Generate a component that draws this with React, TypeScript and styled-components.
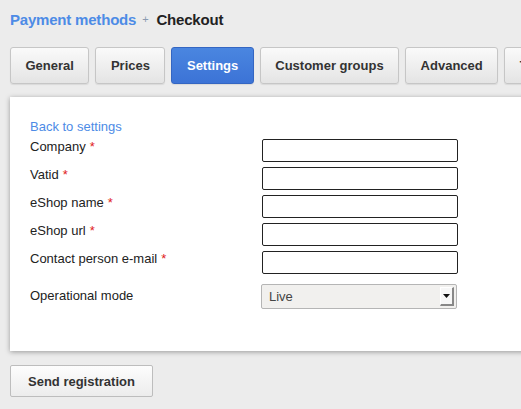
import * as React from 'react';
import styled, { createGlobalStyle } from 'styled-components';

const GlobalStyle = createGlobalStyle`
  html, body {
    margin: 0;
    padding: 0;
    overflow: hidden;
    background: #ececec;
    font-family: "Liberation Sans", Arial, sans-serif;
    color: #222;
  }
`;

const Page = styled.div`
  width: 620px;
  padding: 10px;
`;

const Breadcrumb = styled.div`
  display: flex;
  align-items: center;
  height: 18px;
  font-size: 15px;
  font-weight: bold;
  letter-spacing: -0.2px;
`;

const CrumbLink = styled.a`
  color: #4d8be6;
  text-decoration: none;
`;

const CrumbSeparator = styled.span`
  color: #8a9ab0;
  font-size: 11px;
  font-weight: normal;
  margin: 0 8px 0 6px;
`;

const CrumbCurrent = styled.span`
  color: #222;
`;

const Tabs = styled.div`
  display: flex;
  gap: 6px;
  margin-top: 19px;
  white-space: nowrap;
`;

const Tab = styled.button<{ $active?: boolean }>`
  height: 37px;
  padding: 0 14.5px;
  border: 1px solid ${(p) => (p.$active ? '#3466c2' : '#c6c6c6')};
  border-radius: 3px;
  background: ${(p) =>
    p.$active
      ? 'linear-gradient(#4a86e0, #3c73d6)'
      : 'linear-gradient(#fafafa, #e4e4e4)'};
  color: ${(p) => (p.$active ? '#fff' : '#333')};
  font-family: inherit;
  font-size: 13px;
  font-weight: bold;
  box-shadow: 0 1px 1px rgba(0, 0, 0, 0.08);
  flex-shrink: 0;
`;

const Panel = styled.div`
  margin-top: 13px;
  background: #fff;
  padding: 20px 20px 42px;
  box-shadow: 0 1px 5px rgba(0, 0, 0, 0.35);
`;

const BackLink = styled.a`
  display: block;
  color: #4d8be6;
  font-size: 13px;
  line-height: 16px;
  margin-top: 2px;
  text-decoration: none;
`;

const Form = styled.div`
  display: grid;
  grid-template-columns: 232px 196px;
  row-gap: 5px;
  margin-top: 4px;
`;

const Label = styled.label`
  font-size: 13px;
  line-height: 16px;
`;

const Required = styled.span`
  color: #e01b1b;
  margin-left: 4px;
`;

const TextInput = styled.input`
  box-sizing: border-box;
  width: 196px;
  height: 23px;
  border: 1px solid #222;
  border-radius: 2px;
  background: #fff;
`;

const SelectLabel = styled(Label)`
  margin-top: 5px;
  padding-top: 4px;
`;

const FakeSelect = styled.div`
  box-sizing: border-box;
  margin-top: 5px;
  margin-left: -1px;
  width: 196px;
  height: 25px;
  display: flex;
  align-items: center;
  justify-content: space-between;
  padding: 0 2px 0 7px;
  border: 1px solid #b5b5b5;
  border-radius: 2px;
  background: #f1f0ee;
  color: #444;
  font-size: 13px;
`;

const ArrowBox = styled.span`
  box-sizing: border-box;
  width: 14px;
  height: 19px;
  display: flex;
  align-items: center;
  justify-content: center;
  background: #f7f7f7;
  border-right: 2px solid #888;
  border-bottom: 2px solid #888;
  border-top: 1px solid #fff;
  border-left: 1px solid #fff;
`;

const SendButton = styled.button`
  margin-top: 14px;
  height: 32px;
  padding: 0 17px;
  border: 1px solid #bdbdbd;
  border-radius: 2px;
  background: linear-gradient(#fdfdfd, #ececec);
  color: #333;
  font-family: inherit;
  font-size: 13px;
  font-weight: bold;
`;

const fields = [
  'Company',
  'Vatid',
  'eShop name',
  'eShop url',
  'Contact person e-mail',
];

export default function App() {
  return (
    <>
      <GlobalStyle />
      <Page>
        <Breadcrumb>
          <CrumbLink href="#">Payment methods</CrumbLink>
          <CrumbSeparator>+</CrumbSeparator>
          <CrumbCurrent>Checkout</CrumbCurrent>
        </Breadcrumb>

        <Tabs>
          <Tab>General</Tab>
          <Tab>Prices</Tab>
          <Tab $active>Settings</Tab>
          <Tab>Customer groups</Tab>
          <Tab>Advanced</Tab>
          <Tab>Translations</Tab>
        </Tabs>

        <Panel>
          <BackLink href="#">Back to settings</BackLink>
          <Form>
            {fields.map((f) => (
              <React.Fragment key={f}>
                <Label>
                  {f}
                  <Required>*</Required>
                </Label>
                <TextInput type="text" />
              </React.Fragment>
            ))}
            <SelectLabel>Operational mode</SelectLabel>
            <FakeSelect>
              <span>Live</span>
              <ArrowBox>
                <svg width="7" height="4" viewBox="0 0 7 4">
                  <path d="M0 0h7L3.5 4z" fill="#111" />
                </svg>
              </ArrowBox>
            </FakeSelect>
          </Form>
        </Panel>

        <SendButton>Send registration</SendButton>
      </Page>
    </>
  );
}
